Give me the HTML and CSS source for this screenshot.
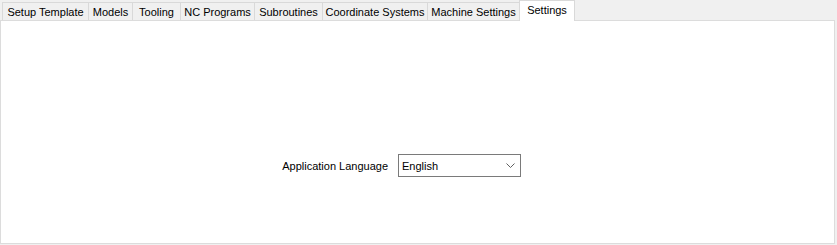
FILE: index.html
```html
<!DOCTYPE html>
<html lang="en">
<head>
    <meta charset="UTF-8">
    <title>Settings</title>
    <link rel="stylesheet" href="styles.css">
</head>
<body>
    <div class="tabs">
        <div class="tab" style="width: 87px">Setup Template</div>
        <div class="tab" style="width: 44px">Models</div>
        <div class="tab" style="width: 48px">Tooling</div>
        <div class="tab" style="width: 74px">NC Programs</div>
        <div class="tab" style="width: 68px">Subroutines</div>
        <div class="tab" style="width: 105px">Coordinate Systems</div>
        <div class="tab" style="width: 92px">Machine Settings</div>
        <div class="tab active" style="width: 56px">Settings</div>
    </div>
    <div class="panel">
        <div class="row">
            <label class="label">Application Language</label>
            <div class="combo">
                <span>English</span>
                <svg class="chevron" width="9" height="5" viewBox="0 0 9 5">
                    <path d="M0.5 0.5 L4.5 4.5 L8.5 0.5" fill="none" stroke="#606060" stroke-width="1"/>
                </svg>
            </div>
        </div>
    </div>
</body>
</html>
```

FILE: styles.css
```css
body {
    margin: 0;
    background: #f0f0f0;
    font-family: "Liberation Sans", Arial, sans-serif;
    font-size: 11px;
    color: #000;
}
.tabs {
    display: flex;
    align-items: flex-end;
    height: 20px;
    padding-left: 2px;
    position: relative;
    z-index: 1;
}
.tab {
    box-sizing: border-box;
    height: 18px;
    border: 1px solid #d9d9d9;
    border-bottom: none;
    border-left: none;
    background: #f0f0f0;
    text-align: center;
    line-height: 19px;
    white-space: nowrap;
}
.tab:first-child {
    border-left: 1px solid #d9d9d9;
}
.tab.active {
    height: 21px;
    margin-bottom: -1px;
    background: #fff;
    border-left: 1px solid #d9d9d9;
    margin-left: -1px;
    line-height: 18px;
}
.panel {
    box-sizing: border-box;
    width: 835px;
    height: 224px;
    background: #fff;
    border: 1px solid #dcdcdc;
    padding: 133px 0 0 276px;
}
.row {
    display: flex;
    align-items: center;
    gap: 10px;
}
.label {
    width: 111px;
    text-align: right;
    white-space: nowrap;
}
.combo {
    box-sizing: border-box;
    width: 123px;
    height: 23px;
    border: 1px solid #7a7a7a;
    display: flex;
    align-items: center;
    justify-content: space-between;
    padding: 0 5px 0 3px;
}
.chevron {
    display: block;
}
```
